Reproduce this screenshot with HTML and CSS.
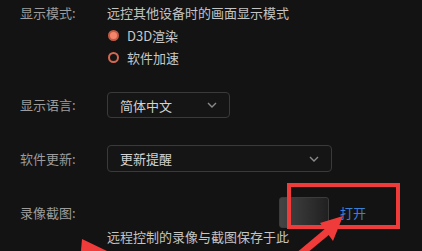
FILE: index.html
```html
<!DOCTYPE html>
<html lang="zh-CN">
<head>
    <meta charset="UTF-8">
    <meta name="viewport" content="width=device-width, initial-scale=1.0">
    <title>显示设置</title>
    <link rel="stylesheet" href="styles.css">
</head>
<body>
    <div class="page">
        <div class="row row-mode">
            <div class="label">显示模式:</div>
            <div class="field">
                <div class="desc">远控其他设备时的画面显示模式</div>
                <label class="radio">
                    <span class="dot checked"></span>
                    <span>D3D渲染</span>
                </label>
                <label class="radio">
                    <span class="dot"></span>
                    <span>软件加速</span>
                </label>
            </div>
        </div>

        <div class="row row-lang">
            <div class="label">显示语言:</div>
            <div class="select select-short">
                <span>简体中文</span>
                <svg class="chev" width="10" height="6" viewBox="0 0 10 6"><path d="M1 1l4 4 4-4" fill="none" stroke="#8a8a8a" stroke-width="1.4"/></svg>
            </div>
        </div>

        <div class="row row-update">
            <div class="label">软件更新:</div>
            <div class="select select-long">
                <span>更新提醒</span>
                <svg class="chev" width="10" height="6" viewBox="0 0 10 6"><path d="M1 1l4 4 4-4" fill="none" stroke="#8a8a8a" stroke-width="1.4"/></svg>
            </div>
        </div>

        <div class="row row-capture">
            <div class="label">录像截图:</div>
            <div class="path-box"></div>
            <a class="open-link">打开</a>
        </div>
        <div class="note">远程控制的录像与截图保存于此</div>
    </div>

    <!-- annotation overlay -->
    <svg class="marks" width="422" height="251" viewBox="0 0 422 251">
        <rect x="289" y="185" width="109" height="42" fill="none" stroke="#f03b3b" stroke-width="4"/>
        <polygon points="343,216 320,223 333,241" fill="#f03b3b"/>
        <line x1="298" y1="256" x2="328" y2="231" stroke="#f03b3b" stroke-width="7"/>
        <polygon points="82,239 107,251 80,262" fill="#f03b3b"/>
    </svg>
</body>
</html>
```

FILE: styles.css
```css
body {
    margin: 0;
    background: #131313;
    font-family: "Noto Sans CJK SC", "Liberation Sans", sans-serif;
    font-size: 13px;
    overflow: hidden;
}
.page {
    padding: 4px 0 0 20px;
}
.row {
    display: flex;
    align-items: center;
}
.row-mode {
    align-items: flex-start;
}
.label {
    width: 87px;
    color: #9c9c9c;
    line-height: 18px;
    flex-shrink: 0;
}
.desc {
    color: #c4c4c4;
    line-height: 18px;
    margin-bottom: 2px;
}
.radio {
    display: flex;
    align-items: center;
    height: 22px;
    color: #c8c8c8;
}
.dot {
    flex-shrink: 0;
    box-sizing: border-box;
    width: 11px;
    height: 11px;
    border-radius: 50%;
    border: 2px solid #d9674f;
    margin: 0 8px 0 1px;
    background: #151515;
}
.dot.checked {
    background: #f4846c;
    border-color: #c45a42;
}
.row-lang {
    margin-top: 24px;
}
.row-update {
    margin-top: 27px;
}
.select {
    display: flex;
    align-items: center;
    justify-content: space-between;
    box-sizing: border-box;
    border: 1px solid #3a3a3a;
    border-radius: 4px;
    background: #151515;
    color: #d2d2d2;
    padding: 0 12px 0 12px;
}
.select-short {
    width: 123px;
    height: 26px;
}
.select-long {
    width: 225px;
    height: 27px;
}
.row-capture {
    margin-top: 25px;
}
.path-box {
    margin-left: 172px;
    width: 50px;
    height: 31px;
    box-sizing: border-box;
    border: 1px solid #3c3c3c;
    border-radius: 3px;
    background: linear-gradient(90deg, #444, #333 50%, #202020);
}
.open-link {
    margin-left: 11px;
    color: #3b7fd6;
    line-height: 18px;
}
.note {
    padding-left: 87px;
    color: #c4c4c4;
    line-height: 18px;
}
.marks {
    position: absolute;
    left: 0;
    top: 0;
}
```
